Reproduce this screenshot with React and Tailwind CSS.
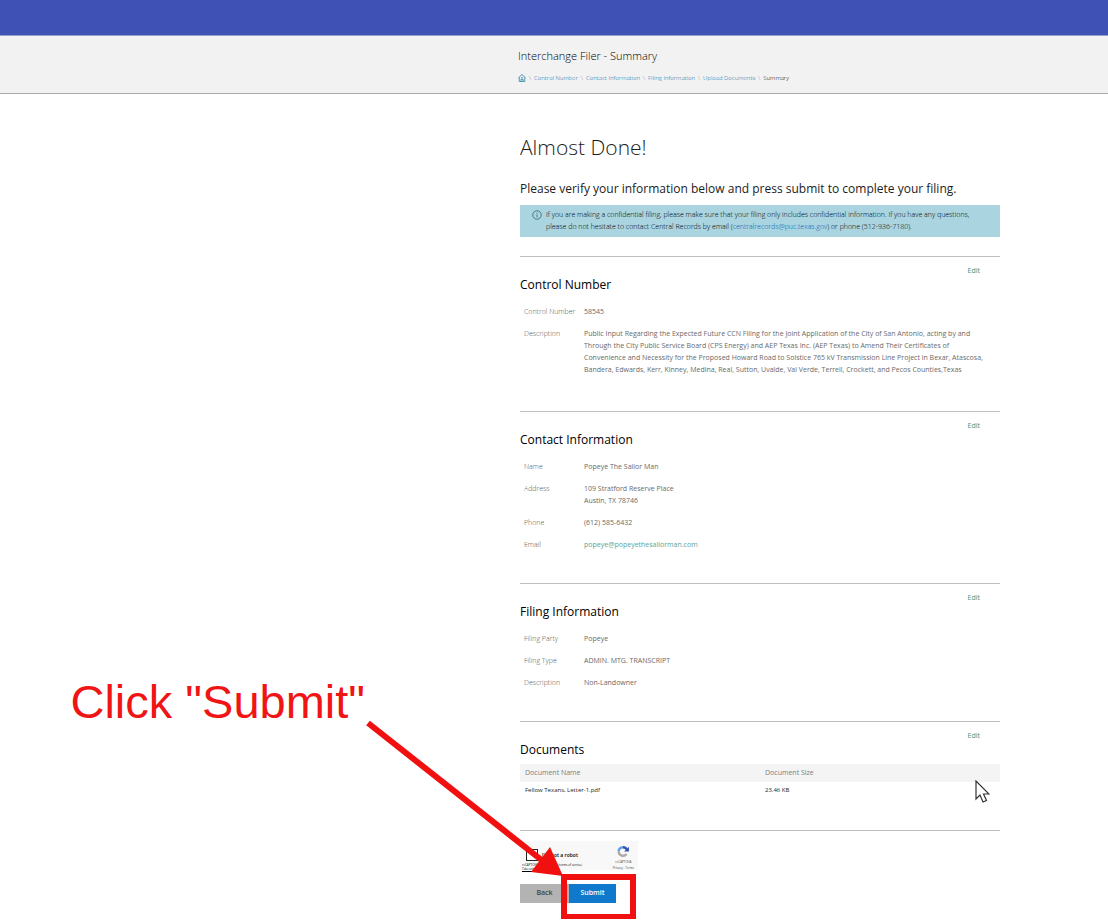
import clsx from 'clsx'

const crumbs = ['Control Number', 'Contact Information', 'Filing Information', 'Upload Documents']

const contactRows = [
  { label: 'Name', value: 'Popeye The Sailor Man' },
  { label: 'Address', value: <>109 Stratford Reserve Place<br />Austin, TX 78746</> },
  { label: 'Phone', value: '(612) 585-6432' },
  {
    label: 'Email',
    value: <a href="mailto:popeye@popeyethesailorman.com" className="text-[#5aa596]">popeye@popeyethesailorman.com</a>,
  },
]

const filingRows = [
  { label: 'Filing Party', value: 'Popeye' },
  { label: 'Filing Type', value: 'ADMIN. MTG. TRANSCRIPT' },
  { label: 'Description', value: 'Non-Landowner' },
]

const controlRows = [
  { label: 'Control Number', value: '58545' },
  {
    label: 'Description',
    value: (
      <>
        Public Input Regarding the Expected Future CCN Filing for the Joint Application of the City of San Antonio, acting by and<br />
        Through the City Public Service Board (CPS Energy) and AEP Texas Inc. (AEP Texas) to Amend Their Certificates of<br />
        Convenience and Necessity for the Proposed Howard Road to Solstice 765 kV Transmission Line Project in Bexar, Atascosa,<br />
        Bandera, Edwards, Kerr, Kinney, Medina, Real, Sutton, Uvalde, Val Verde, Terrell, Crockett, and Pecos Counties,Texas
      </>
    ),
  },
]

function HomeIcon() {
  return (
    <svg viewBox="0 0 16 16" className="size-2" fill="none" stroke="#3a8fae" strokeWidth="1.8">
      <path d="M1 7.5 8 1l7 6.5M2.5 6.5V15h11V6.5" />
      <path d="M6 15v-4.5h4V15M6 7.5h4" />
    </svg>
  )
}

function InfoIcon() {
  return (
    <svg viewBox="0 0 20 20" className="mt-px size-2.5 shrink-0" fill="none" stroke="#2f6673" strokeWidth="1.6">
      <circle cx="10" cy="10" r="8.5" />
      <path d="M10 9v5.5M10 5.5v2" />
    </svg>
  )
}

function RecaptchaLogo() {
  return (
    <svg viewBox="0 0 24 24" className="size-3.5" fill="none" strokeWidth="4.5">
      <path d="M4 12a8 8 0 0 1 8-8" stroke="#5f9be8" />
      <path d="M12 4a8 8 0 0 1 7.5 5.5" stroke="#3455b5" />
      <path d="M4 12a8 8 0 0 0 14.5 4.5" stroke="#ababab" />
      <path d="M23 3v9H14z" fill="#3455b5" stroke="none" />
    </svg>
  )
}

function Section({ title, className, children }) {
  return (
    <section className={clsx('border-t border-[#bdbdbd] pt-2', className)}>
      <div className="flex h-2.5 items-center justify-end pr-5">
        <a href="#edit" className="text-[7px] leading-none text-[#3f9384]">Edit</a>
      </div>
      <h2 className="text-[12px] leading-5 font-medium text-black">{title}</h2>
      {children}
    </section>
  )
}

function DetailList({ rows }) {
  return (
    <dl className="mt-[11px] grid gap-2.5 pl-1">
      {rows.map((row) => (
        <div key={row.label} className="grid grid-cols-[60px_1fr] leading-3">
          <dt className="text-[7px] leading-3 font-light text-[#555]">{row.label}</dt>
          <dd className="text-[7px] leading-3 whitespace-nowrap text-[#6a6a6a]">{row.value}</dd>
        </div>
      ))}
    </dl>
  )
}

function Captcha() {
  return (
    <div className="mt-2.5 flex h-[29px] w-[118px] justify-between bg-[#f8f8f8] pt-1 pr-1 pl-0.5">
      <div className="pt-0.5">
        <label className="flex h-4 items-center gap-1 pl-1 text-[5px] leading-2 font-semibold text-black">
          <input type="checkbox" className="size-3 appearance-none border border-[#222] bg-white" />
          I'm not a robot
        </label>
        <p className="text-[3px] leading-1 whitespace-nowrap text-black">
          reCAPTCHA is changing its terms of service.<br />
          <a href="#terms" className="underline">Take action</a>
        </p>
      </div>
      <div className="flex flex-col items-center text-[3px] leading-1 text-[#444]">
        <RecaptchaLogo />
        <span className="mt-0.5">reCAPTCHA</span>
        <span className="mt-0.5">Privacy - Terms</span>
      </div>
    </div>
  )
}

function SubmitCallout() {
  return (
    <div className="pointer-events-none absolute -top-[169px] -right-5 flex">
      <p className="-mt-10 font-['Liberation_Sans',sans-serif] text-[47px] leading-[54px] font-normal whitespace-nowrap text-[#f01414]">
        Click "Submit"
      </p>
      <svg viewBox="365 715 271 208" className="h-[208px] w-[271px] shrink-0 overflow-visible" fill="none">
        <path d="M368 723 544 862" stroke="#f01010" strokeWidth="6" />
        <path d="M563 876 550 847 531 872z" fill="#f01010" />
        <rect x="564" y="877" width="69" height="40" stroke="#f01010" strokeWidth="6" />
      </svg>
    </div>
  )
}

function MouseCursor() {
  return (
    <svg viewBox="0 0 15 23" className="absolute top-4 right-2.5 h-[23px] w-[15px]" fill="#fff" stroke="#333" strokeWidth="1.2">
      <path d="M1 1v18l4-4 3 7 3.5-1.5-3-6.5H14z" />
    </svg>
  )
}

export default function App() {
  return (
    <div className="overflow-x-hidden bg-white font-['Open_Sans','Noto_Sans',sans-serif] text-[#1c1c1c]">
      <div className="h-9 border-b border-[#98a0d0] bg-[#3f51b5]" />
      <header className="flex justify-end border-b border-[#a9a9a9] bg-[#f2f2f2] pr-27">
        <div className="w-full max-w-[482px] pt-3 pb-[9px]">
          <h1 className="text-[11px] leading-4 font-light text-black">Interchange Filer - Summary</h1>
          <nav aria-label="Breadcrumb" className="mt-2 flex h-3 items-center gap-[3px] text-[6px] leading-3 font-light whitespace-nowrap">
            <a href="#home" aria-label="Home"><HomeIcon /></a>
            {crumbs.map((crumb) => (
              <span key={crumb} className="flex gap-[3px]">
                <span className="text-[#8a8a8a]">\</span>
                <a href="#step" className="text-[#0a6cab]">{crumb}</a>
              </span>
            ))}
            <span className="text-[#8a8a8a]">\</span>
            <span className="text-black">Summary</span>
          </nav>
        </div>
      </header>

      <main className="flex justify-end pr-27 pb-4">
        <div className="w-full max-w-[480px] pt-[37px]">
          <h2 className="text-[21px] leading-8 font-light">Almost Done!</h2>
          <p className="mt-4 text-[12px] leading-5 whitespace-nowrap">
            Please verify your information below and press submit to complete your filing.
          </p>
          <div className="mt-1.5 flex gap-1 bg-[#a9d4e0] px-3 py-1">
            <InfoIcon />
            <p className="text-[7px] leading-3 font-light whitespace-nowrap text-black">
              If you are making a confidential filing, please make sure that your filing only includes confidential information. If you have any questions,<br />
              please do not hesitate to contact Central Records by email (<a href="mailto:centralrecords@puc.texas.gov" className="text-[#005fb8]">centralrecords@puc.texas.gov</a>) or phone (512-936-7180).
            </p>
          </div>

          <div className="mt-[19px]">
            <Section title="Control Number" className="pb-[35px]">
              <DetailList rows={controlRows} />
            </Section>
            <Section title="Contact Information" className="pb-8">
              <DetailList rows={contactRows} />
            </Section>
            <Section title="Filing Information" className="pb-8">
              <DetailList rows={filingRows} />
            </Section>
            <Section title="Documents" className="border-b pb-8">
              <div className="relative mt-1">
                <table className="w-full table-fixed text-left text-[7px]">
                  <thead className="bg-[#f4f4f4] text-[#7d7d7d]">
                    <tr className="h-[18px]">
                      <th className="py-0 pl-[5px] font-normal">Document Name</th>
                      <th className="py-0 pl-[5px] font-normal">Document Size</th>
                    </tr>
                  </thead>
                  <tbody className="text-[6px] leading-4">
                    <tr>
                      <td className="pl-[5px]">Fellow Texans, Letter-1.pdf</td>
                      <td className="pl-[5px]">23.46 KB</td>
                    </tr>
                  </tbody>
                </table>
                <MouseCursor />
              </div>
            </Section>
          </div>

          <Captcha />
          <div className="mt-3.5 flex h-[19px] text-[7px] font-semibold">
            <button type="button" className="w-[49px] bg-[#b3b3b3] text-[#444]">Back</button>
            <div className="relative flex">
              <button type="submit" className="w-[47px] bg-[#1079cc] text-white">Submit</button>
              <SubmitCallout />
            </div>
          </div>
        </div>
      </main>
    </div>
  )
}
